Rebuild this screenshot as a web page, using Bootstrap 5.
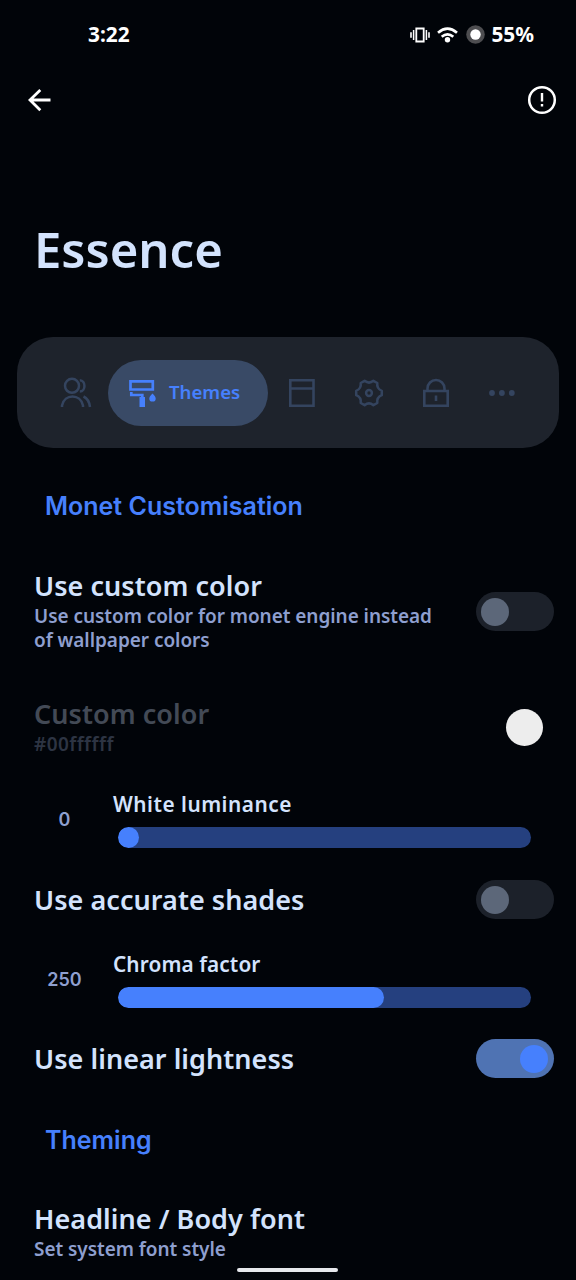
<!DOCTYPE html>
<html lang="en">
<head>
<meta charset="utf-8">
<meta name="viewport" content="width=device-width, initial-scale=1">
<title>Essence</title>
<link href="https://cdn.jsdelivr.net/npm/bootstrap@5.3.0/dist/css/bootstrap.min.css" rel="stylesheet">
<script src="https://cdn.jsdelivr.net/npm/bootstrap@5.3.0/dist/js/bootstrap.bundle.min.js" defer></script>
<style>
body{background:#010409;color:#d3e3fd;font-family:"Noto Sans","Open Sans",sans-serif;width:576px;height:1280px;overflow:hidden}
svg{display:block;flex:none}
.status-bar{height:68px;padding:1px 42px 0 88px;color:#fff;font-size:20.8px;font-weight:700}
.status-icons svg:nth-child(2){margin:0 8px 0 7px}
.status-icons span{margin-left:6px}
.top-bar{height:64px;padding:0 19px 0 26px;color:#fff}
.title-area{height:205px;padding:87px 0 0 34px}
.title-area h1{font-size:49px;font-weight:600;line-height:60px;margin:0}
.tab-panel{height:111px;margin:0 17px;border-radius:36px;background:#1e232c;color:#34445f;padding:0 44px 0 43px}
.tab-active{width:160px;height:66px;background:#394a66;color:#4680fd;font-size:18.6px;font-weight:600;padding-left:19px;gap:12px}
.tab-active span{padding-bottom:1px}
.tab-rest{padding-left:21px}
.tab-rest svg:nth-child(2),.tab-rest svg:nth-child(3){margin-left:-1px}
.section-name{height:116px;color:#4680fd;font-family:Inter,sans-serif;font-size:25px;font-weight:600;padding:2px 0 0 45px}
.section-short{height:80px}
.pref{padding:0 22px 0 34px}
.pref-name{font-size:27px;font-weight:600;line-height:30px;letter-spacing:.05px}
.pref-sub{font-size:19px;font-weight:600;line-height:24px;letter-spacing:-.05px;margin-top:3px;color:#8e9fcf}
.pref-single{padding-bottom:1px}
.toggle{width:78px;height:39px;background:#1c212a;padding:0 5px}
.toggle i{width:28px;height:28px;background:#5c6779}
.toggle.is-on{background:#4f73b3;justify-content:flex-end;padding-right:6px}
.toggle.is-on i{background:#4680fd}
.swatch{width:37px;height:37px;background:#ededed;margin-right:11px}
.pref-tall{height:94px;padding-top:1px}
.is-disabled{height:124px;padding-top:15px}
.is-disabled .pref-name{color:#434a56}
.is-disabled .pref-sub{color:#2d3443;letter-spacing:.4px}
.slide-row{height:76px}
.slide-value{width:97px;padding-left:32px;font:600 18px/75px Inter,sans-serif;color:#8e9fcf}
.slide-body{margin-left:16px}
.slide-name{font-size:20.8px;font-weight:600;line-height:24px;margin:10px 0 11px;letter-spacing:.1px}
.slide-name.is-wide{letter-spacing:.5px}
.progress{width:413px;height:21px;border-radius:11px;background:#25407f;margin-left:5px}
.progress-bar{border-radius:11px;background:#4680fd}
.home-pill{left:237px;top:1268px;width:101px;height:4px;background:#e6e8ec}
</style>
</head>
<body class="position-relative">
<div class="status-bar d-flex align-items-center justify-content-between">
  <span>3:22</span>
  <div class="status-icons d-flex align-items-center">
    <svg width="20" height="16" viewBox="0 0 20 16" fill="none" stroke="currentColor"><path d="M6.300 1.500h7.400v13H6.300z" stroke-width="1.800"/><path d="M3.600 3v10M16.400 3v10" stroke-width="1.500"/><path d="M1 5.300v5.400M19 5.300v5.400" stroke-width="1.600"/></svg>
    <svg width="21" height="16" viewBox="0 0 21 16" fill="none" stroke="currentColor" stroke-width="2.700"><path d="M1 5.700Q10.500-2.300 20 5.700M4.700 9.800Q10.500 5 16.300 9.800"/><circle cx="10.500" cy="12.800" r="2.700" fill="currentColor" stroke="none"/></svg>
    <svg width="19" height="19" viewBox="0 0 19 19"><circle cx="9.500" cy="9.500" r="9.300" fill="#4d4d50"/><circle cx="9.500" cy="9.500" r="5.200" fill="#fff"/></svg>
    <span>55%</span>
  </div>
</div>
<div class="top-bar d-flex align-items-center justify-content-between">
  <svg width="26" height="24" viewBox="0 0 26 24" fill="none" stroke="currentColor" stroke-width="2.800"><path d="M24.500 12H4M14.300 2 4 12l10.300 10.200"/></svg>
  <svg width="30" height="30" viewBox="0 0 30 30" fill="none" stroke="currentColor"><circle cx="15" cy="15" r="12.800" stroke-width="2.500"/><path d="M15 8v8.500M15 19v2.600" stroke-width="2.400"/></svg>
</div>
<div class="title-area"><h1>Essence</h1></div>
<div class="tab-panel d-flex align-items-center">
  <svg width="32" height="32" viewBox="0 0 32 32" fill="none" stroke="currentColor" stroke-width="2.500"><circle cx="12" cy="8.800" r="7"/><path d="M2 30V28.500C4.500 16.500 20.500 16.500 23 28.500V30M19.800 3.200C26 3.500 26 14.300 19.800 14.600M23.500 19.500Q29 22 30 30"/></svg>
  <div class="tab-active rounded-pill d-flex align-items-center ms-3">
    <svg width="30" height="30" viewBox="0 0 30 30" fill="none" stroke="currentColor"><path d="M3.500 3.300h22.300v8.200H3.500z" stroke-width="2.700"/><path d="M4.300 14v3h11v3" stroke-width="2.700"/><path d="M12.500 19h5.500V29h-5.500z" fill="currentColor" stroke="none"/><path d="M25.500 15.500c2.200 2.500 3.200 3.500 3.200 4.900a3.200 3.200 0 0 1-6.400 0c0-1.400 1-2.400 3.200-4.900z" fill="currentColor" stroke="none"/></svg>
    <span>Themes</span>
  </div>
  <div class="tab-rest d-flex align-items-center justify-content-between flex-grow-1">
    <svg width="26" height="30" viewBox="0 0 26 30" fill="none" stroke="currentColor" stroke-width="2.600"><path d="M1.300 2.300h23.200v25.400H1.300zM1.300 10.500h23.200"/></svg>
    <svg width="30" height="30" viewBox="0 0 30 30" fill="none" stroke="currentColor" stroke-width="2.500"><circle cx="15" cy="15" r="2.900"/><path stroke-linejoin="round" d="M10.600 2.800Q15 6.400 19.400 2.800L23.300 5Q22.500 10.600 27.800 12.800V17.200Q22.500 19.400 23.300 25L19.400 27.200Q15 23.600 10.600 27.200L6.700 25Q7.500 19.400 2.200 17.200V12.800Q7.500 10.600 6.700 5Z"/></svg>
    <svg width="26" height="30" viewBox="0 0 26 30" fill="none" stroke="currentColor" stroke-width="2.600"><path d="M1.300 13h23.400v14.700H1.300zM4.500 13V10.500a8.500 8.500 0 0 1 17 0V13"/><path d="M13 17.500v5.500"/></svg>
    <svg width="26" height="8" viewBox="0 0 26 8" fill="currentColor"><circle cx="3" cy="4" r="2.900"/><circle cx="12.900" cy="4" r="2.900"/><circle cx="22.800" cy="4" r="2.900"/></svg>
  </div>
</div>
<div class="section-name d-flex align-items-center">Monet Customisation</div>
<div class="pref pref-tall d-flex align-items-center justify-content-between">
  <div><div class="pref-name">Use custom color</div><div class="pref-sub">Use custom color for monet engine instead<br>of wallpaper colors</div></div>
  <div class="toggle rounded-pill d-flex align-items-center"><i class="rounded-circle"></i></div>
</div>
<div class="pref is-disabled d-flex align-items-center justify-content-between">
  <div><div class="pref-name">Custom color</div><div class="pref-sub">#00ffffff</div></div>
  <div class="swatch rounded-circle"></div>
</div>
<div class="slide-row d-flex">
  <div class="slide-value text-center">0</div>
  <div class="slide-body"><div class="slide-name is-wide">White luminance</div><div class="progress"><div class="progress-bar" style="width:5.1%"></div></div></div>
</div>
<div class="pref d-flex align-items-center justify-content-between pref-single" style="height:84px">
  <div class="pref-name">Use accurate shades</div>
  <div class="toggle rounded-pill d-flex align-items-center"><i class="rounded-circle"></i></div>
</div>
<div class="slide-row d-flex">
  <div class="slide-value text-center">250</div>
  <div class="slide-body"><div class="slide-name">Chroma factor</div><div class="progress"><div class="progress-bar" style="width:64.4%"></div></div></div>
</div>
<div class="pref d-flex align-items-center justify-content-between pref-single" style="height:82px">
  <div class="pref-name">Use linear lightness</div>
  <div class="toggle is-on rounded-pill d-flex align-items-center"><i class="rounded-circle"></i></div>
</div>
<div class="section-name section-short d-flex align-items-center">Theming</div>
<div class="pref pt-4">
  <div class="pref-name">Headline / Body font</div><div class="pref-sub">Set system font style</div>
</div>
<div class="home-pill position-absolute rounded-pill"></div>
</body>
</html>
